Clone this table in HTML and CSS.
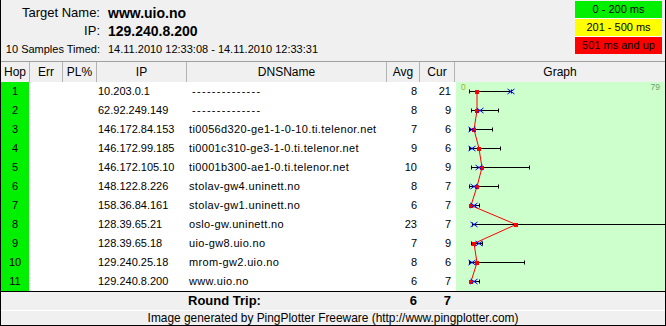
FILE: index.html
```html
<!DOCTYPE html>
<html>
<head>
<meta charset="utf-8">
<link rel="stylesheet" href="styles.css">
</head>
<body>
<div class="frame">
  <div class="top">
    <div class="info">
      <div class="lbl">Target Name:</div><div class="val">www.uio.no</div>
      <div class="lbl">IP:</div><div class="val">129.240.8.200</div>
      <div class="lbl sm">10 Samples Timed:</div><div class="val sm">14.11.2010 12:33:08 - 14.11.2010 12:33:31</div>
    </div>
    <div class="legend">
      <div class="lg g">0 - 200 ms</div>
      <div class="lg y">201 - 500 ms</div>
      <div class="lg r">501 ms and up</div>
    </div>
  </div>
  <div class="table">
    <div class="th">Hop</div><div class="th">Err</div><div class="th">PL%</div><div class="th">IP</div><div class="th">DNSName</div><div class="th">Avg</div><div class="th">Cur</div><div class="th last">Graph</div>
    <div class="graph">
      <svg width="209" height="209" viewBox="0 0 209 209">
        <text x="5" y="7.5" class="g0">0</text>
        <text x="204" y="7.5" class="g79" text-anchor="end">79</text>
        <g stroke="#000" stroke-width="1" fill="none">
          <path d="M13.5 9.5H55.5M13.5 7.5V11.5M55.5 7.5V11.5"/>
          <path d="M15.5 28.5H42.5M15.5 26.5V30.5M42.5 26.5V30.5"/>
          <path d="M13.5 47.5H36.5M13.5 45.5V49.5M36.5 45.5V49.5"/>
          <path d="M13.5 66.5H44.5M13.5 64.5V68.5M44.5 64.5V68.5"/>
          <path d="M15.5 85.5H73.5M15.5 83.5V87.5M73.5 83.5V87.5"/>
          <path d="M13.5 104.5H42.5M13.5 102.5V106.5M42.5 102.5V106.5"/>
          <path d="M14.5 123.5H23.5M14.5 121.5V125.5M23.5 121.5V125.5"/>
          <path d="M16.5 142.5H209M16.5 140.5V144.5"/>
          <path d="M15.5 161.5H26.5M15.5 159.5V163.5M26.5 159.5V163.5"/>
          <path d="M13.5 180.5H68.5M13.5 178.5V182.5M68.5 178.5V182.5"/>
          <path d="M15.5 199.5H23.5M15.5 197.5V201.5M23.5 197.5V201.5"/>
        </g>
        <polyline fill="none" stroke="#f00" stroke-width="1" points="21,9.5 21,28.5 18,47.5 23,66.5 26,85.5 21,104.5 15,123.5 60,142.5 18,161.5 21,180.5 15,199.5"/>
        <g fill="#f00" shape-rendering="crispEdges">
          <rect x="19" y="8" width="4" height="4"/>
          <rect x="19" y="27" width="4" height="4"/>
          <rect x="16" y="46" width="4" height="4"/>
          <rect x="21" y="65" width="4" height="4"/>
          <rect x="24" y="84" width="4" height="4"/>
          <rect x="19" y="103" width="4" height="4"/>
          <rect x="13" y="122" width="4" height="4"/>
          <rect x="58" y="141" width="4" height="4"/>
          <rect x="16" y="160" width="4" height="4"/>
          <rect x="19" y="179" width="4" height="4"/>
          <rect x="13" y="198" width="4" height="4"/>
        </g>
        <g stroke="#00f" stroke-width="1" fill="none">
          <path d="M51.5 7L58.5 12M51.5 12L58.5 7"/>
          <path d="M20.5 26L27.5 31M20.5 31L27.5 26"/>
          <path d="M12.5 45L19.5 50M12.5 50L19.5 45"/>
          <path d="M12.5 64L19.5 69M12.5 69L19.5 64"/>
          <path d="M19.5 83L26.5 88M19.5 88L26.5 83"/>
          <path d="M14.5 102L21.5 107M14.5 107L21.5 102"/>
          <path d="M14.5 121L21.5 126M14.5 126L21.5 121"/>
          <path d="M14.5 140L21.5 145M14.5 145L21.5 140"/>
          <path d="M19.5 159L26.5 164M19.5 164L26.5 159"/>
          <path d="M12.5 178L19.5 183M12.5 183L19.5 178"/>
          <path d="M14.5 197L21.5 202M14.5 202L21.5 197"/>
        </g>
      </svg>
    </div>
    <div class="hop">1</div><div></div><div></div><div class="ip">10.203.0.1</div><div class="dns"><span class="dash">--------------</span></div><div class="num">8</div><div class="num cur">21</div>
    <div class="hop">2</div><div></div><div></div><div class="ip">62.92.249.149</div><div class="dns"><span class="dash">--------------</span></div><div class="num">8</div><div class="num cur">9</div>
    <div class="hop">3</div><div></div><div></div><div class="ip">146.172.84.153</div><div class="dns">ti0056d320-ge1-1-0-10.ti.telenor.net</div><div class="num">7</div><div class="num cur">6</div>
    <div class="hop">4</div><div></div><div></div><div class="ip">146.172.99.185</div><div class="dns">ti0001c310-ge3-1-0.ti.telenor.net</div><div class="num">9</div><div class="num cur">6</div>
    <div class="hop">5</div><div></div><div></div><div class="ip">146.172.105.10</div><div class="dns">ti0001b300-ae1-0.ti.telenor.net</div><div class="num">10</div><div class="num cur">9</div>
    <div class="hop">6</div><div></div><div></div><div class="ip">148.122.8.226</div><div class="dns">stolav-gw4.uninett.no</div><div class="num">8</div><div class="num cur">7</div>
    <div class="hop">7</div><div></div><div></div><div class="ip">158.36.84.161</div><div class="dns">stolav-gw1.uninett.no</div><div class="num">6</div><div class="num cur">7</div>
    <div class="hop">8</div><div></div><div></div><div class="ip">128.39.65.21</div><div class="dns">oslo-gw.uninett.no</div><div class="num">23</div><div class="num cur">7</div>
    <div class="hop">9</div><div></div><div></div><div class="ip">128.39.65.18</div><div class="dns">uio-gw8.uio.no</div><div class="num">7</div><div class="num cur">9</div>
    <div class="hop">10</div><div></div><div></div><div class="ip">129.240.25.18</div><div class="dns">mrom-gw2.uio.no</div><div class="num">8</div><div class="num cur">6</div>
    <div class="hop">11</div><div></div><div></div><div class="ip">129.240.8.200</div><div class="dns">www.uio.no</div><div class="num">6</div><div class="num cur">7</div>
  </div>
  <div class="rt">
    <div class="rtl">Round Trip:</div><div class="num">6</div><div class="num cur">7</div>
  </div>
  <div class="foot">Image generated by PingPlotter Freeware (http://www.pingplotter.com)</div>
</div>
</body>
</html>
```

FILE: styles.css
```css
html, body { margin: 0; padding: 0; background: #fff; }
body { font-family: "Liberation Sans", Arial, sans-serif; color: #000; }
.frame {
  width: 666px; height: 326px; box-sizing: border-box;
  border: 1px solid #000; border-top: none;
  background: #f0f0f0;
  display: flex; flex-direction: column;
}
.top {
  height: 62px; box-sizing: border-box;
  border-bottom: 1px solid #a0a0a0;
  display: flex; justify-content: space-between; align-items: flex-start;
}
.info {
  display: grid; grid-template-columns: 99px auto; column-gap: 8px;
  grid-auto-rows: 18px; padding-top: 4px;
  line-height: 18px; white-space: nowrap;
}
.lbl { text-align: right; font-size: 13px; }
.val { font-size: 14px; font-weight: bold; }
.lbl.sm, .val.sm { font-size: 11px; font-weight: normal; }
.legend {
  margin: 1px 3px 0 0; width: 87px;
  background: #fff; display: flex; flex-direction: column; gap: 1px;
}
.lg { height: 17px; line-height: 17px; text-align: center; font-size: 11px; }
.lg.g { background: #00f000; }
.lg.y { background: #ffff00; }
.lg.r { background: #ff0000; }
.table {
  display: grid;
  grid-template-columns: 29px 33px 34px 90px 200px 33px 35px 210px;
  grid-template-rows: 20px repeat(11, 19px);
  background: #fff;
  font-size: 11px; line-height: 19px; white-space: nowrap;
}
.th {
  background: #f0f0f0; font-size: 12px; line-height: 20px; text-align: center;
  border-right: 1px solid #b4b4b4; box-sizing: border-box;
}
.th.last { border-right: none; }
.graph { grid-column: 8; grid-row: 2 / span 11; padding-left: 1px; background: #fff; }
.graph svg { display: block; background: #ccffcc; }
.g0 { font-size: 8.5px; fill: #99b820; font-family: "Liberation Sans", Arial, sans-serif; }
.g79 { font-size: 8.5px; fill: #70a070; font-family: "Liberation Sans", Arial, sans-serif; }
.hop {
  background: #00f000; border-right: 1px solid #fff; box-sizing: border-box;
  text-align: center;
}
.ip { padding-left: 1px; }
.dns { padding-left: 2px; overflow: hidden; letter-spacing: 0.35px; }
.dash { margin-left: 3px; letter-spacing: 1.3px; }
.num { text-align: right; padding-right: 3px; }
.num.cur { padding-right: 4px; }
.rt {
  display: grid;
  grid-template-columns: 29px 33px 34px 90px 200px 33px 35px 210px;
  height: 20px; box-sizing: border-box;
  border-top: 1px solid #000; border-bottom: 1px solid #fff;
  font-size: 13px; font-weight: bold; line-height: 18px;
}
.rtl { grid-column: 5; padding-left: 1px; }
.foot { font-size: 11.9px; line-height: 14px; text-align: center; white-space: nowrap; }
```
